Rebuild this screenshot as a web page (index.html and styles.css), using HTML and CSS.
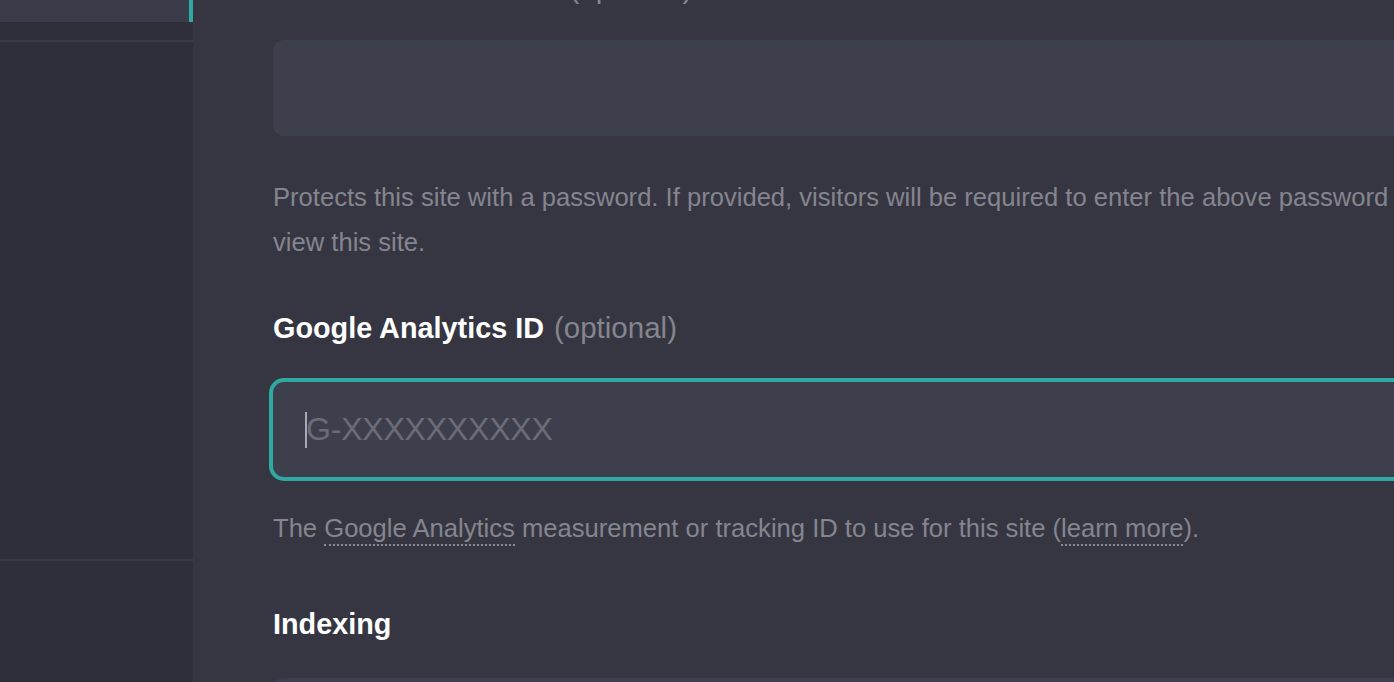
FILE: index.html
```html
<!DOCTYPE html>
<html lang="en">
<head>
<meta charset="utf-8">
<title>Site settings</title>
<link rel="stylesheet" href="styles.css">
</head>
<body>
<div class="app">
  <aside class="sidebar">
    <div class="nav-item active"></div>
    <div class="nav-gap"></div>
    <div class="nav-sep"></div>
    <div class="nav-body"></div>
    <div class="nav-sep"></div>
  </aside>
  <main class="main">
    <div class="content">
      <div class="field-label">Password Protection <span class="optional">(optional)</span></div>
      <div class="input"></div>
      <p class="help help-first">Protects this site with a password. If provided, visitors will be required to enter the above password to view this site.</p>

      <div class="field-label label-ga">Google Analytics ID <span class="optional">(optional)</span></div>
      <div class="input focused"><span class="caret"></span><span class="placeholder">G-XXXXXXXXXX</span></div>
      <p class="help help-second">The <a class="dotted">Google Analytics</a> measurement or tracking ID to use for this site (<a class="dotted">learn more</a>).</p>

      <div class="field-label label-index">Indexing</div>
      <div class="input"></div>
    </div>
  </main>
</div>
</body>
</html>
```

FILE: styles.css
```css
* { box-sizing: border-box; }
html, body { margin: 0; padding: 0; height: 100%; overflow: hidden; }
body {
  background: #363642;
  font-family: "Liberation Sans", Arial, Helvetica, sans-serif;
  color: #ffffff;
}
.app {
  display: flex;
  height: 682px;
}
.sidebar {
  width: 193px;
  flex: 0 0 193px;
  background: #2f2f3a;
  display: flex;
  flex-direction: column;
}
.nav-item {
  height: 22px;
  background: #3b3c49;
  border-right: 4px solid #2eaaa2;
}
.nav-gap { height: 18px; }
.nav-sep { height: 2px; background: #3b3b47; }
.nav-body { height: 517px; }
.main {
  flex: 1;
  overflow: hidden;
}
.content {
  margin-top: -32px;
  padding-left: 80px;
}
.field-label {
  font-size: 28.8px;
  font-weight: 700;
  line-height: 40px;
  height: 40px;
  white-space: nowrap;
  margin-bottom: 32px;
}
.optional {
  font-weight: 400;
  font-size: 29.5px;
  color: #85858f;
  margin-left: 2px;
}
.input {
  height: 96px;
  background: #3e3f4c;
  border-radius: 11px;
  margin-right: -20px;
  position: relative;
  display: flex;
  align-items: center;
  padding-left: 32px;
}
.input.focused {
  height: 95px;
  box-shadow: 0 0 0 4px #2eaaa2;
}
.caret {
  width: 2px;
  height: 36px;
  background: #a9a9b2;
  margin-right: -1px;
}
.placeholder {
  font-size: 32px;
  color: #6c6c78;
  letter-spacing: -0.2px;
}
.help {
  margin: 0;
  font-size: 25.6px;
  line-height: 45px;
  color: #85858f;
  width: 1180px;
}
.help-first { margin-top: 39px; margin-bottom: 43px; }
.help-second { margin-top: 29px; margin-bottom: 53px; white-space: nowrap; }
.dotted {
  color: #85858f;
  text-decoration: none;
  padding-bottom: 2px;
  border-bottom: 2px dotted #8a8a94;
}
.label-ga { margin-bottom: 34px; }
.label-index { margin-bottom: 34px; }
```
